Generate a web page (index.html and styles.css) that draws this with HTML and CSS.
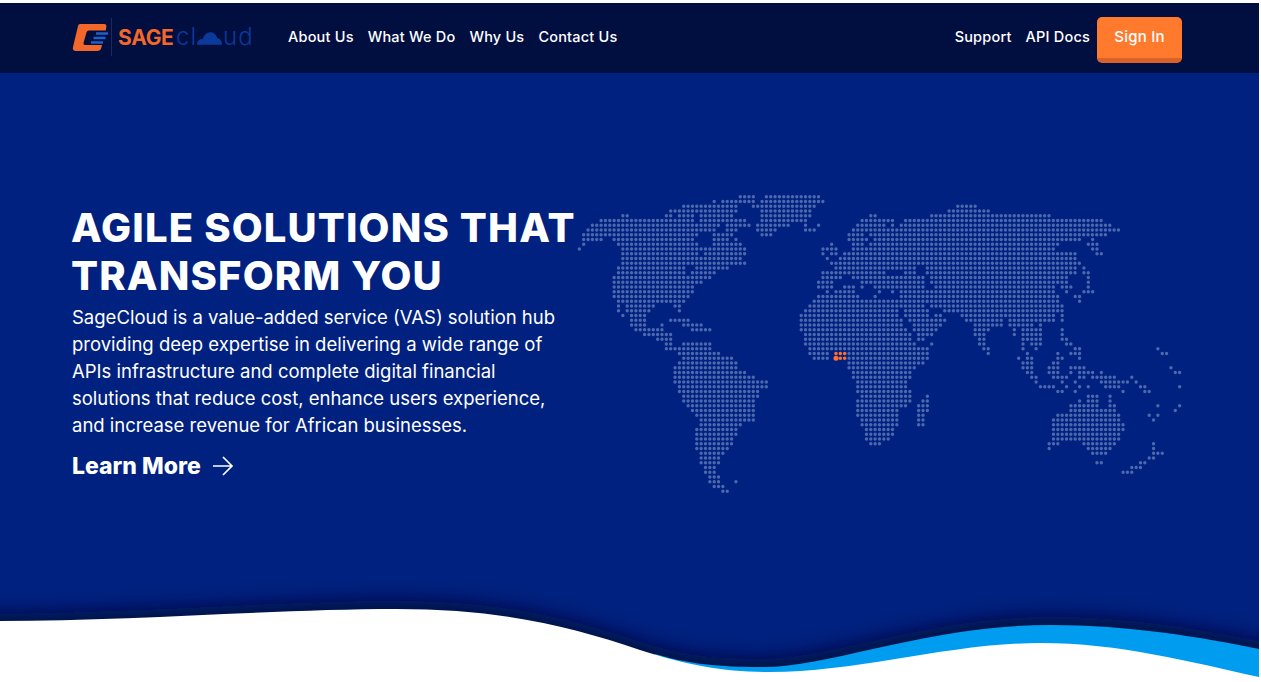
FILE: index.html

```html
<!DOCTYPE html>
<html lang="en">
<head>
  <meta charset="UTF-8" />
  <meta name="viewport" content="width=device-width, initial-scale=1.0"/>
  <title>SageCloud</title>
  <link rel="stylesheet" href="styles.css">
</head>
<body>
  <div class="page">
    <header class="topbar">
      <a class="logo" href="#">
        <svg class="logo-mark" viewBox="0 0 36 30">
          <path fill="#f2682a" d="M8 2H32Q35 2 34.300 5L33.800 8.500H17Q15 8.500 14.500 10.500L11.500 21Q11 23 13 23H30L29.300 26Q28.600 29 25 29H4Q0 29 1 25L6 4Q6.500 2 8 2Z"/>
          <path stroke="#1e62c8" stroke-width="2.400" d="M24 11.500H36M21.500 16H33.500M19 20.500H31"/>
        </svg>
        <span class="logo-rule"></span>
        <span class="logo-sage">SAGE</span>
        <span class="logo-cloud">cl<svg class="logo-puff" viewBox="0 0 26 14"><path fill="#0b3a9c" d="M0 14Q0 8 6 8Q8 1 14 1Q19 1 21 7Q26 8 26 14Z"/></svg>ud</span>
      </a>
      <nav class="nav">
        <a href="#">About Us</a>
        <a href="#">What We Do</a>
        <a href="#">Why Us</a>
        <a href="#">Contact Us</a>
      </nav>
      <nav class="nav nav-right">
        <a href="#">Support</a>
        <a href="#">API Docs</a>
        <a class="signin" href="#">Sign In</a>
      </nav>
    </header>

    <section class="hero">
      <div class="hero-text">
        <h1>AGILE SOLUTIONS THAT<br>TRANSFORM YOU</h1>
        <p>SageCloud is a value-added service (VAS) solution hub<br>providing deep expertise in delivering a wide range of<br>APIs infrastructure and complete digital financial<br>solutions that reduce cost, enhance users experience,<br>and increase revenue for African businesses.</p>
        <a class="learn" href="#">Learn More
          <svg class="learn-arrow" viewBox="0 0 22 20"><path d="M1 10H20M11 1L20 10L11 19"/></svg>
        </a>
      </div>

      <!-- one grid unit = one dot: x is the column, y the row -->
      <svg class="map" viewBox="-1 -1 141 65" preserveAspectRatio="none">
        <path class="dots" d="
          M37 0H40M43 0H55
          M31 1h.5M33 1H40M42 1H56
          M24 2H36M40 2H54M87 2H91
          M21 3H36M42 3H53M85 3H94
          M10 4H11M20 4H21M23 4H26M28 4H35M42 4H53M67 4H68M81 4H108
          M5 5H21M22 5H26M28 5H33M34 5H38M42 5H52M65 5H72M75 5H120
          M3 6H32M34 6H39M41 6H48M52 6h.5M55 6h.5M64 6H70M72 6h.5M74 6H122
          M2 7H31M34 7H36M41 7H45M52 7H54M63 7H124
          M1 8H27M31 8H34M35 8h.5M42 8H44M62 8H65M67 8H121
          M1 9H5M8 9H26M31 9H34M36 9h.5M62 9H66M68 9H115M118 9h.5
          M1 10h.5M9 10H27M31 10H37M58 10h.5M63 10H65M67 10H110M117 10H119
          M0 11h.5M10 11H28M29 11H38M56 11H59M63 11H109M118 11H119
          M10 12H27M29 12H38M56 12h.5M58 12H59M61 12H114M119 12H120
          M10 13H37M57 13h.5M60 13H114
          M10 14H24M25 14H34M35 14H38M58 14H115
          M9 15H24M27 15H34M59 15H77M80 15H114M116 15h.5
          M9 16H23M24 16h.5M26 16H31M56 16H70M75 16H77M80 16H114M116 16H117
          M8 17H30M56 17H60M63 17H79M81 17H112M117 17h.5
          M8 18H28M55 18H58M65 18H79M81 18H112M117 18h.5
          M8 19H26M55 19H58M61 19H63M65 19h.5M68 19H79M82 19H109M111 19H113M117 19h.5
          M8 20H26M57 20h.5M59 20H63M69 20h.5M72 20h.5M74 20H109M112 20h.5M116 20H118
          M8 21H25M55 21H64M68 21h.5M74 21H110M114 21H115
          M9 22H24M54 22H110M115 22h.5
          M9 23h.5M11 23H17M22 23H23M53 23H79M81 23H111
          M9 24h.5M11 24H16M23 24h.5M52 24H73M75 24H80M84 24H111
          M10 25h.5M12 25H15M51 25H73M75 25H80M82 25H83M88 25H109M111 25h.5
          M12 26H15M21 26H25M51 26H74M76 26H84M89 26H97M99 26H109M111 26h.5
          M12 27H15M19 27h.5M24 27H28M51 27H74M77 27H83M91 27H97M99 27H104M106 27h.5
          M13 28H19M26 28H30M51 28H75M77 28H82M91 28H94M100 28h.5M102 28H106M111 28h.5
          M15 29H21M52 29H76M78 29H81M91 29H93M100 29h.5M102 29H106M111 29h.5
          M18 30H21M52 30H76M78 30H79M92 30H93M102 30H106M111 30H112
          M20 31H21M24 31H30M52 31H77M81 31h.5M92 31H93M102 31h.5M104 31H106M112 31H113
          M20 32H30M53 32H80M93 32H94M102 32h.5M105 32h.5M114 32H115M133 32h.5
          M23 33H32M53 33H57M62 33H80M94 33h.5M103 33h.5M110 33h.5M113 33H115M134 33H135
          M24 34H35M54 34H57M62 34H80M101 34h.5M103 34H104M110 34H111M115 34h.5
          M23 35H36M62 35H79M102 35H104M109 35H110
          M22 36H36M62 36H77M102 36H104M108 36H110M113 36H116M136 36h.5
          M22 37H38M63 37H76M103 37H104M108 37H110M113 37h.5M115 37H118M120 37h.5M137 37H138
          M22 38H40M63 38H76M104 38H105M109 38H110M111 38H112M115 38H116M118 38H123M127 38h.5
          M22 39H43M64 39H75M105 39h.5M111 39h.5M114 39h.5M120 39H126M128 39h.5
          M23 40H43M64 40H75M106 40H109M112 40h.5M115 40h.5M117 40h.5M121 40H124M129 40H130M138 40h.5
          M23 41H41M64 41H76M110 41H111M114 41h.5M125 41h.5M130 41H131
          M24 42H41M65 42H76M80 42h.5M117 42H119M122 42h.5
          M24 43H40M64 43H76M79 43H80M115 43h.5M117 43H119M122 43h.5
          M25 44H40M64 44H75M78 44H80M113 44H119M122 44H123M133 44h.5M138 44h.5
          M26 45H40M64 45H73M78 45H80M113 45H123M137 45h.5
          M27 46H40M64 46H73M78 46H79M110 46H124M131 46h.5M133 46h.5
          M28 47H40M65 47H73M78 47H79M109 47H124M132 47h.5
          M28 48H37M65 48H73M78 48H79M109 48H125
          M27 49H36M66 49H72M109 49H125
          M27 50H36M66 50H72M109 50H124
          M27 51H35M66 51H71M109 51H124
          M27 52H35M67 52H69M108 52H110M116 52H123M132 52h.5
          M27 53H34M108 53h.5M117 53H122M132 53h.5
          M28 54H33M118 54H121M132 54H134
          M28 55H32M131 55H132
          M28 56H32M119 56H120M129 56H130
          M29 57H31M127 57H129
          M29 58H31M125 58H127
          M30 59H32
          M30 60H32M36 60h.5
          M31 61H33
          M33 62H34"/>
        <path class="dots dots-hot" d="M59 33H61M59 34H61"/>
        <path class="dots dots-hot dots-pin" d="M59 34h.5"/>
      </svg>

      <svg class="wave" viewBox="0 580 1259 102" preserveAspectRatio="none">
        <defs>
          <filter id="waveShade" x="-5%" y="-60%" width="110%" height="220%">
            <feGaussianBlur stdDeviation="10"/>
          </filter>
        </defs>
        <path class="wave-shade" filter="url(#waveShade)" d="M-30 614C130 614 280 601 396 601C500 601 570 618 640 642C690 658 725 659 764 659C830 659 930 617 1050 617C1130 617 1200 629 1290 647V720H-30Z"/>
        <path class="wave-blue" d="M655 654C695 666 730 667 764 667C830 667 930 625 1050 625C1130 625 1200 637 1259 649V682H655Z"/>
        <path class="wave-white" d="M0 621C130 621 280 609 396 609C500 609 570 626 640 650C690 666 725 672 770 672C860 672 950 643 1040 643C1120 643 1190 662 1259 677V682H0Z"/>
      </svg>
    </section>
  </div>
</body>
</html>
```

FILE: styles.css

```css
* {
  box-sizing: border-box;
}
html, body {
  margin: 0;
  background: #fff;
  overflow: hidden;
}
body {
  font-family: "Inter", "Liberation Sans", sans-serif;
  color: #fff;
  height: 682px;
}
a {
  color: inherit;
  text-decoration: none;
}
.page {
  width: 1259px;
  padding-top: 3px;
}

/* top bar */
.topbar {
  display: flex;
  align-items: flex-start;
  height: 70px;
  padding: 14px 77px 0 72px;
  background: #000e40;
}
.logo {
  display: flex;
  align-items: center;
  width: 216px;
  height: 40px;
}
.logo-mark {
  width: 36px;
  height: 30px;
  flex: none;
}
.logo-rule {
  width: 1px;
  height: 38px;
  margin: 0 6px 0 3px;
  background: #1a2a5c;
}
.logo-sage {
  flex: none;
  width: 58px;
  font-size: 21px;
  font-weight: 700;
  letter-spacing: -0.3px;
  color: #f2682a;
}
.logo-cloud {
  display: flex;
  align-items: center;
  font-size: 24px;
  font-weight: 300;
  line-height: 1;
  letter-spacing: 1px;
  color: #0b3a9c;
}
.logo-puff {
  width: 25px;
  height: 14px;
  margin: 2px 1px 0 0;
}
.nav {
  display: flex;
  gap: 14px;
  font-size: 14.500px;
  font-weight: 500;
  line-height: 40px;
  letter-spacing: 0.2px;
}
.nav-right {
  margin-left: auto;
}
.signin {
  display: block;
  width: 85px;
  height: 46px;
  margin-left: -7px;
  text-align: center;
  font-size: 15px;
  background: #ff7a2d;
  border-bottom: 5px solid #d9622a;
  border-radius: 5px;
}

/* hero */
.hero {
  position: relative;
  display: flex;
  align-items: flex-start;
  height: 609px;
  padding: 118.500px 0 0 72px;
  overflow: hidden;
  background: #00217f;
}
.hero-text {
  flex: none;
  width: 503px;
  padding-top: 12px;
}
h1 {
  margin: 0 0 0 -1px;
  font-size: 40px;
  font-weight: 800;
  line-height: 48px;
  letter-spacing: 1.15px;
  white-space: nowrap;
}
.hero-text p {
  margin: 4px 0 0;
  font-size: 18.500px;
  line-height: 27px;
  white-space: nowrap;
}
.learn {
  display: flex;
  align-items: center;
  gap: 11px;
  margin-top: 12px;
  font-size: 23px;
  font-weight: 800;
  line-height: 30px;
}
.learn-arrow {
  width: 22px;
  height: 20px;
  fill: none;
  stroke: #fff;
  stroke-width: 1.700;
}

/* dotted world map */
.map {
  flex: none;
  width: 613.350px;
  height: 308.750px;
}
.dots {
  fill: none;
  stroke: #4d69ae;
  stroke-width: 3.400;
  stroke-linecap: round;
  stroke-dasharray: 0 4.345;
  vector-effect: non-scaling-stroke;
}
.dots-hot {
  stroke: #ff6f2c;
  stroke-width: 3.600;
}
.dots-pin {
  stroke-width: 5;
}

/* wave along the bottom of the hero */
.wave {
  position: absolute;
  left: 0;
  bottom: 0;
  width: 1259px;
  height: 102px;
}
.wave-shade {
  fill: #000e40;
}
.wave-blue {
  fill: #009cf0;
}
.wave-white {
  fill: #fff;
}
```
